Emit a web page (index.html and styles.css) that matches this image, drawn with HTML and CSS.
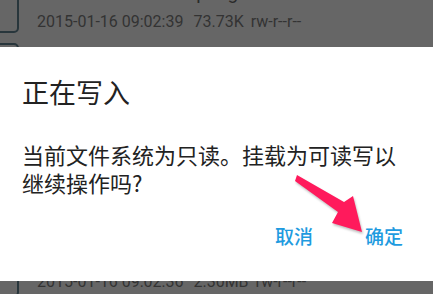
FILE: index.html
```html
<!DOCTYPE html>
<html lang="zh-CN">
<head>
<meta charset="utf-8">
<title>正在写入</title>
<link rel="stylesheet" href="styles.css">
</head>
<body>
<div class="screen">
  <section class="list list-top">
    <div class="row row-first">
      <div class="icon"></div>
      <div class="info">
        <div class="name">AM.leafnote.backup.log</div>
        <div class="meta"><span class="date">2015-01-16 09:02:39</span><span class="size">73.73K</span><span class="perm">rw-r--r--</span></div>
      </div>
    </div>
    <div class="row">
      <div class="icon"></div>
      <div class="info"></div>
    </div>
  </section>

  <section class="dialog">
    <h1 class="title">正在写入</h1>
    <p class="message">当前文件系统为只读。挂载为可读写以继续操作吗?</p>
    <div class="actions">
      <button class="btn">取消</button>
      <button class="btn">确定</button>
    </div>
  </section>

  <section class="list list-bottom">
    <div class="row row-last">
      <div class="icon"></div>
      <div class="info">
        <div class="meta"><span class="date">2015-01-16 09:02:36</span><span class="size">2.30MB</span><span class="perm">rw-r--r--</span></div>
      </div>
    </div>
  </section>

  <svg class="arrow" width="433" height="294" viewBox="0 0 433 294">
    <polygon points="297,175 344,202 353,196 362,232 332,223 338,212 295,181" fill="#ff1a5c"/>
  </svg>
</div>
</body>
</html>
```

FILE: styles.css
```css
* { box-sizing: border-box; }
html, body { margin: 0; padding: 0; }
body {
  width: 433px;
  height: 294px;
  overflow: hidden;
  background: #666666;
  font-family: "Noto Sans CJK SC", "Noto Sans", sans-serif;
}
.screen {
  position: relative;
  width: 433px;
  height: 294px;
  display: flex;
  flex-direction: column;
}
.list {
  background: #666666;
  overflow: hidden;
  flex: none;
}
.list-top { height: 47px; }
.list-bottom { height: 13px; }

.row {
  display: flex;
  height: 56px;
  align-items: flex-start;
}
.row-first {
  margin-top: -19px;
  height: 52px;
}
.row-first .icon { margin-top: 6px; }
.icon {
  flex: none;
  width: 48px;
  height: 46px;
  margin-left: -29px;
  margin-top: 10px;
  border: 2px solid #28363c;
  border-radius: 5px;
}
.info {
  margin-left: 18px;
  display: flex;
  flex-direction: column;
}
.name {
  font-family: Roboto, "Liberation Sans", sans-serif;
  font-size: 19px;
  line-height: 22px;
  height: 22px;
  color: #2a2a2a;
  margin-top: 1px;
  white-space: nowrap;
}
.meta {
  font-family: Roboto, "Liberation Sans", sans-serif;
  font-size: 16px;
  line-height: 20px;
  color: #333333;
  margin-top: 8px;
  display: flex;
  white-space: nowrap;
}
.date { margin-right: 10px; }
.size { margin-right: 7px; }

.row-last .icon {
  margin-top: -30px;
}
.row-last .meta { margin-top: -9px; }

.dialog {
  flex: none;
  height: 234px;
  background: #ffffff;
  padding: 29px 24px 0 22px;
  color: #222222;
}
.title {
  margin: 0;
  font-size: 27px;
  line-height: 32px;
  font-weight: 400;
}
.message {
  margin: 32px 0 0 0;
  font-size: 22px;
  line-height: 28px;
}
.actions {
  display: flex;
  justify-content: flex-end;
  gap: 52px;
  margin-top: 28px;
  padding-right: 6px;
}
.btn {
  border: 0;
  background: none;
  padding: 0;
  font-family: "Noto Sans CJK SC", sans-serif;
  font-size: 19px;
  line-height: 24px;
  color: #1e9be0;
  font-weight: 500;
}
.arrow {
  position: absolute;
  left: 0;
  top: 0;
  filter: drop-shadow(1px 2px 1px rgba(0,0,0,0.25));
}
```
